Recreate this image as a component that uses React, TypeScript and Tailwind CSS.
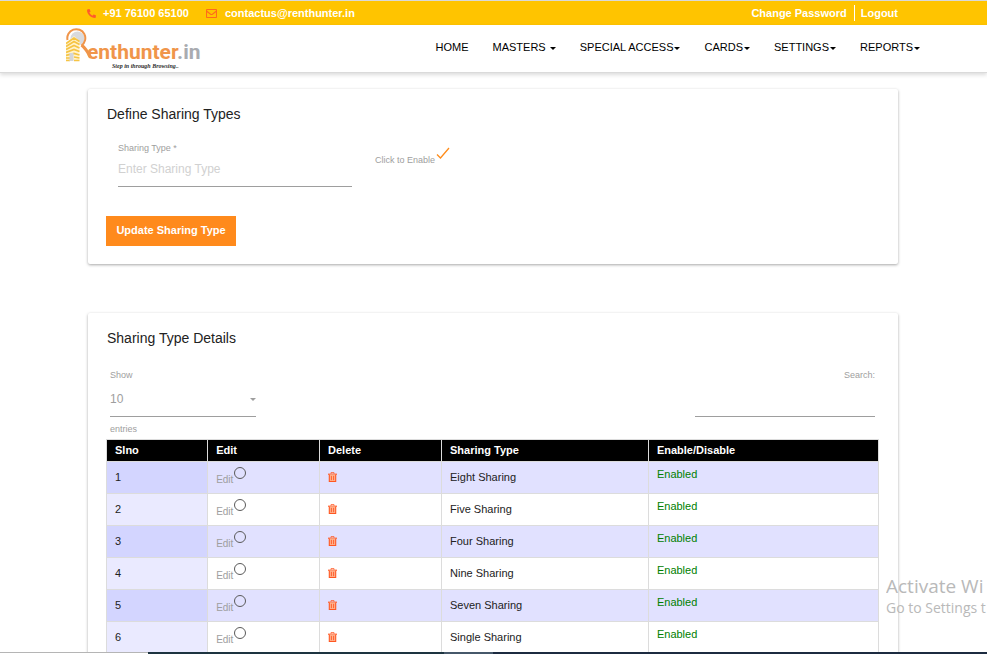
import React from "react";
import { FaPhoneAlt } from "react-icons/fa";

const navItems = [
  { label: "HOME", menu: false },
  { label: "MASTERS ", menu: true },
  { label: "SPECIAL ACCESS", menu: true },
  { label: "CARDS", menu: true },
  { label: "SETTINGS", menu: true },
  { label: "REPORTS", menu: true },
];

const rows = ["Eight Sharing", "Five Sharing", "Four Sharing", "Nine Sharing", "Seven Sharing", "Single Sharing"];

function Caret({ className = "" }: { className?: string }) {
  return (
    <svg className={className} width="6" height="3" viewBox="0 0 6 3" fill="currentColor" aria-hidden="true">
      <path d="M0 0h6L3 3z" />
    </svg>
  );
}

function Envelope() {
  return (
    <svg width="11" height="9" viewBox="0 0 11 9" fill="none" stroke="#ff6a1c" strokeWidth="1.1" aria-hidden="true">
      <rect x="0.5" y="0.5" width="10" height="8" rx="0.8" />
      <path d="M0.8 2.2 4.6 5.2q.9.6 1.8 0L10.2 2.2" />
    </svg>
  );
}

function Trash() {
  return (
    <svg width="9" height="10" viewBox="0 0 9 10" fill="none" stroke="#ff5722" aria-hidden="true">
      <path d="M3 1.8V.6h3v1.2" strokeWidth="0.8" />
      <path d="M0 2.2h9" strokeWidth="1.1" />
      <path d="M1.3 2.5v7h6.4v-7" fill="#ffb38f" strokeWidth="1.1" />
      <path d="M3.4 3.8v4.4M5.6 3.8v4.4" strokeWidth="0.9" />
    </svg>
  );
}

function Logo() {
  return (
    <svg width="138" height="42" viewBox="0 0 138 42" role="img" aria-label="Renthunter.in">
      <circle cx="11.5" cy="10.5" r="7" fill="#d9dadd" />
      <path d="M1.5 12A9 9 0 1 1 15.5 17.5" fill="none" stroke="#f0954a" strokeWidth="2" />
      <path d="M15.5 17q5 4 9 12.500" fill="none" stroke="#f0954a" strokeWidth="3" />
      <path d="M0 15 8 8l5.500 5v19H0z" fill="#fff3cf" />
      <path
        d="M0 15.500 8 10l5.500 3.500M0 18.500l8-5 5.500 3M0 21.500l8-4 5.500 2.500M0 24.500l8-3 5.500 2M0 27.500l8-2 5.500 1.500M0 30h4M8 29l5.500 1M0 32.500h4M8 32.500h5.500"
        fill="none"
        stroke="#f6c443"
        strokeWidth="1.7"
      />
      <path d="M3.500 25h4v8h-4z" fill="#d3d5da" />
      <text x="21" y="31" fill="#f0954a" fontFamily="Roboto, sans-serif" fontWeight="700" fontSize="21">
        enthunter<tspan fill="#a9abb0">.in</tspan>
      </text>
      <text x="46" y="40" fill="#2d2d2d" fontFamily="'Liberation Serif', serif" fontStyle="italic" fontWeight="700" fontSize="6">
        Step in through Browsing..
      </text>
    </svg>
  );
}

export default function App() {
  return (
    <div className="relative flex h-screen flex-col overflow-hidden bg-white font-['Liberation_Sans',Arial,sans-serif] text-[11px] text-[#222]">
      <div className="flex h-[25px] shrink-0 items-center justify-between border-t border-[#d9d9d9] bg-[#ffc400] pr-[89px] pl-[87px] font-bold text-white">
        <div className="flex items-center">
          <FaPhoneAlt className="mr-[7px] text-[#ff5a2c]" size={9} />
          <a href="#phone">+91 76100 65100</a>
          <span className="mr-2 ml-[17px]">
            <Envelope />
          </span>
          <a href="#mail">contactus@renthunter.in</a>
        </div>
        <div className="flex items-center">
          <a href="#password" className="border-r border-white pr-[7px]">
            Change Password
          </a>
          <a href="#logout" className="pl-[6px]">
            Logout
          </a>
        </div>
      </div>

      <header className="flex h-12 shrink-0 items-center justify-between border-b border-[#dadada] pr-[67px] pl-[66px] shadow-[0_2px_4px_rgba(0,0,0,0.14)]">
        <a href="#top">
          <Logo />
        </a>
        <nav className="flex items-center gap-6 pb-[3px] text-black">
          {navItems.map((item) => (
            <a key={item.label} href="#nav" className="flex items-center whitespace-pre">
              {item.label}
              {item.menu && <Caret className="mt-[3px] ml-px" />}
            </a>
          ))}
        </nav>
      </header>

      <main className="flex flex-col gap-[49px] pt-4 pr-[89px] pl-[88px]">
        <section className="rounded-[2px] px-[18px] pt-[17px] pb-[18px] shadow-[0_1px_3px_rgba(0,0,0,0.35)]">
          <h2 className="pl-px text-sm leading-4">Define Sharing Types</h2>
          <div className="flex px-3 pt-5">
            <div className="w-[30%] min-w-0">
              <label htmlFor="sharing" className="block text-[9px] leading-3 text-[#9e9e9e]">
                Sharing Type *
              </label>
              <input
                id="sharing"
                placeholder="Enter Sharing Type"
                className="block h-[33px] w-[104%] border-b border-[#9e9e9e] pb-[3px] text-xs outline-none placeholder:text-[#d1d1d1]"
              />
            </div>
            <label className="ml-8 flex pt-[5px] text-[9px] leading-3 text-[#9e9e9e]">
              <span className="pt-[7px]">Click to Enable</span>
              <input type="checkbox" defaultChecked className="peer sr-only" />
              <svg className="ml-px" width="14" height="12" viewBox="0 0 14 12" fill="none" stroke="#ff8c1a" strokeWidth="1.3" aria-hidden="true">
                <path d="M1 7.5 4.5 11 13 1" />
              </svg>
            </label>
          </div>
          <button type="button" className="mt-[29px] block h-[30px] w-[130px] bg-[#ff8a1c] pb-px text-center font-bold text-white">
            Update Sharing Type
          </button>
        </section>

        <section className="rounded-[2px] pt-[17px] pr-[19px] pb-6 pl-[18px] shadow-[0_1px_3px_rgba(0,0,0,0.35)]">
          <h2 className="pl-px text-sm leading-4">Sharing Type Details</h2>
          <div className="flex justify-between px-1 pt-[23px] pb-1 text-[9px] leading-3 text-[#9e9e9e]">
            <label className="block w-[146px]">
              Show
              <span className="relative mb-1.5 flex items-center">
                <select className="h-9 w-full appearance-none border-b border-[#9e9e9e] bg-transparent text-xs outline-none">
                  <option>10</option>
                </select>
                <Caret className="pointer-events-none absolute right-0" />
              </span>
              entries
            </label>
            <label className="block w-[180px] text-right">
              Search:
              <input type="search" className="block h-9 w-full border-b border-[#9e9e9e] outline-none" />
            </label>
          </div>
          <table className="w-full table-fixed border-collapse text-left">
            <thead>
              <tr className="h-[22px] bg-black text-white">
                <th className="w-[13.1%] border border-[#dcdcdc] px-2">Slno</th>
                <th className="w-[14.5%] border border-[#dcdcdc] px-2">Edit</th>
                <th className="w-[15.8%] border border-[#dcdcdc] px-2">Delete</th>
                <th className="w-[26.8%] border border-[#dcdcdc] px-2">Sharing Type</th>
                <th className="border border-[#dcdcdc] px-2">Enable/Disable</th>
              </tr>
            </thead>
            <tbody>
              {rows.map((name, i) => (
                <tr key={name} className="group h-8 odd:bg-[#e1e1ff]">
                  <td className="border border-[#dcdcdc] bg-[#eaeaff] px-2 group-odd:bg-[#d3d5ff]">{i + 1}</td>
                  <td className="border border-[#dcdcdc] px-2 pb-0.5">
                    <label className="flex items-start text-[10px] leading-3 text-[#9e9e9e]">
                      <span className="pt-[7px]">Edit</span>
                      <input
                        type="radio"
                        name="edit"
                        className="ml-px size-3 appearance-none rounded-full border border-[#5a5a5a] bg-transparent"
                      />
                    </label>
                  </td>
                  <td className="border border-[#dcdcdc] px-2 pb-0.5">
                    <button type="button" aria-label={"Delete " + name} className="block">
                      <Trash />
                    </button>
                  </td>
                  <td className="border border-[#dcdcdc] px-2">{name}</td>
                  <td className="border border-[#dcdcdc] px-2 pb-[7px] text-[#008000]">Enabled</td>
                </tr>
              ))}
            </tbody>
          </table>
        </section>
      </main>

      <div className="pointer-events-none absolute right-0 bottom-9 w-[101px] overflow-hidden font-['Open_Sans','Noto_Sans',sans-serif] whitespace-nowrap text-[#b9b9b9]">
        <div className="text-[19px] leading-6">Activate Wi</div>
        <div className="text-sm leading-5">Go to Settings t</div>
      </div>
      <div className="absolute inset-x-0 bottom-0 flex h-[2px]">
        <div className="w-[15%] border-t border-[#b5b5b5] bg-white" />
        <div className="w-[30%] bg-[#1d3440]" />
        <div className="w-[5%] bg-[#46586a]" />
        <div className="flex-1 bg-[#1c2b40]" />
      </div>
    </div>
  );
}
